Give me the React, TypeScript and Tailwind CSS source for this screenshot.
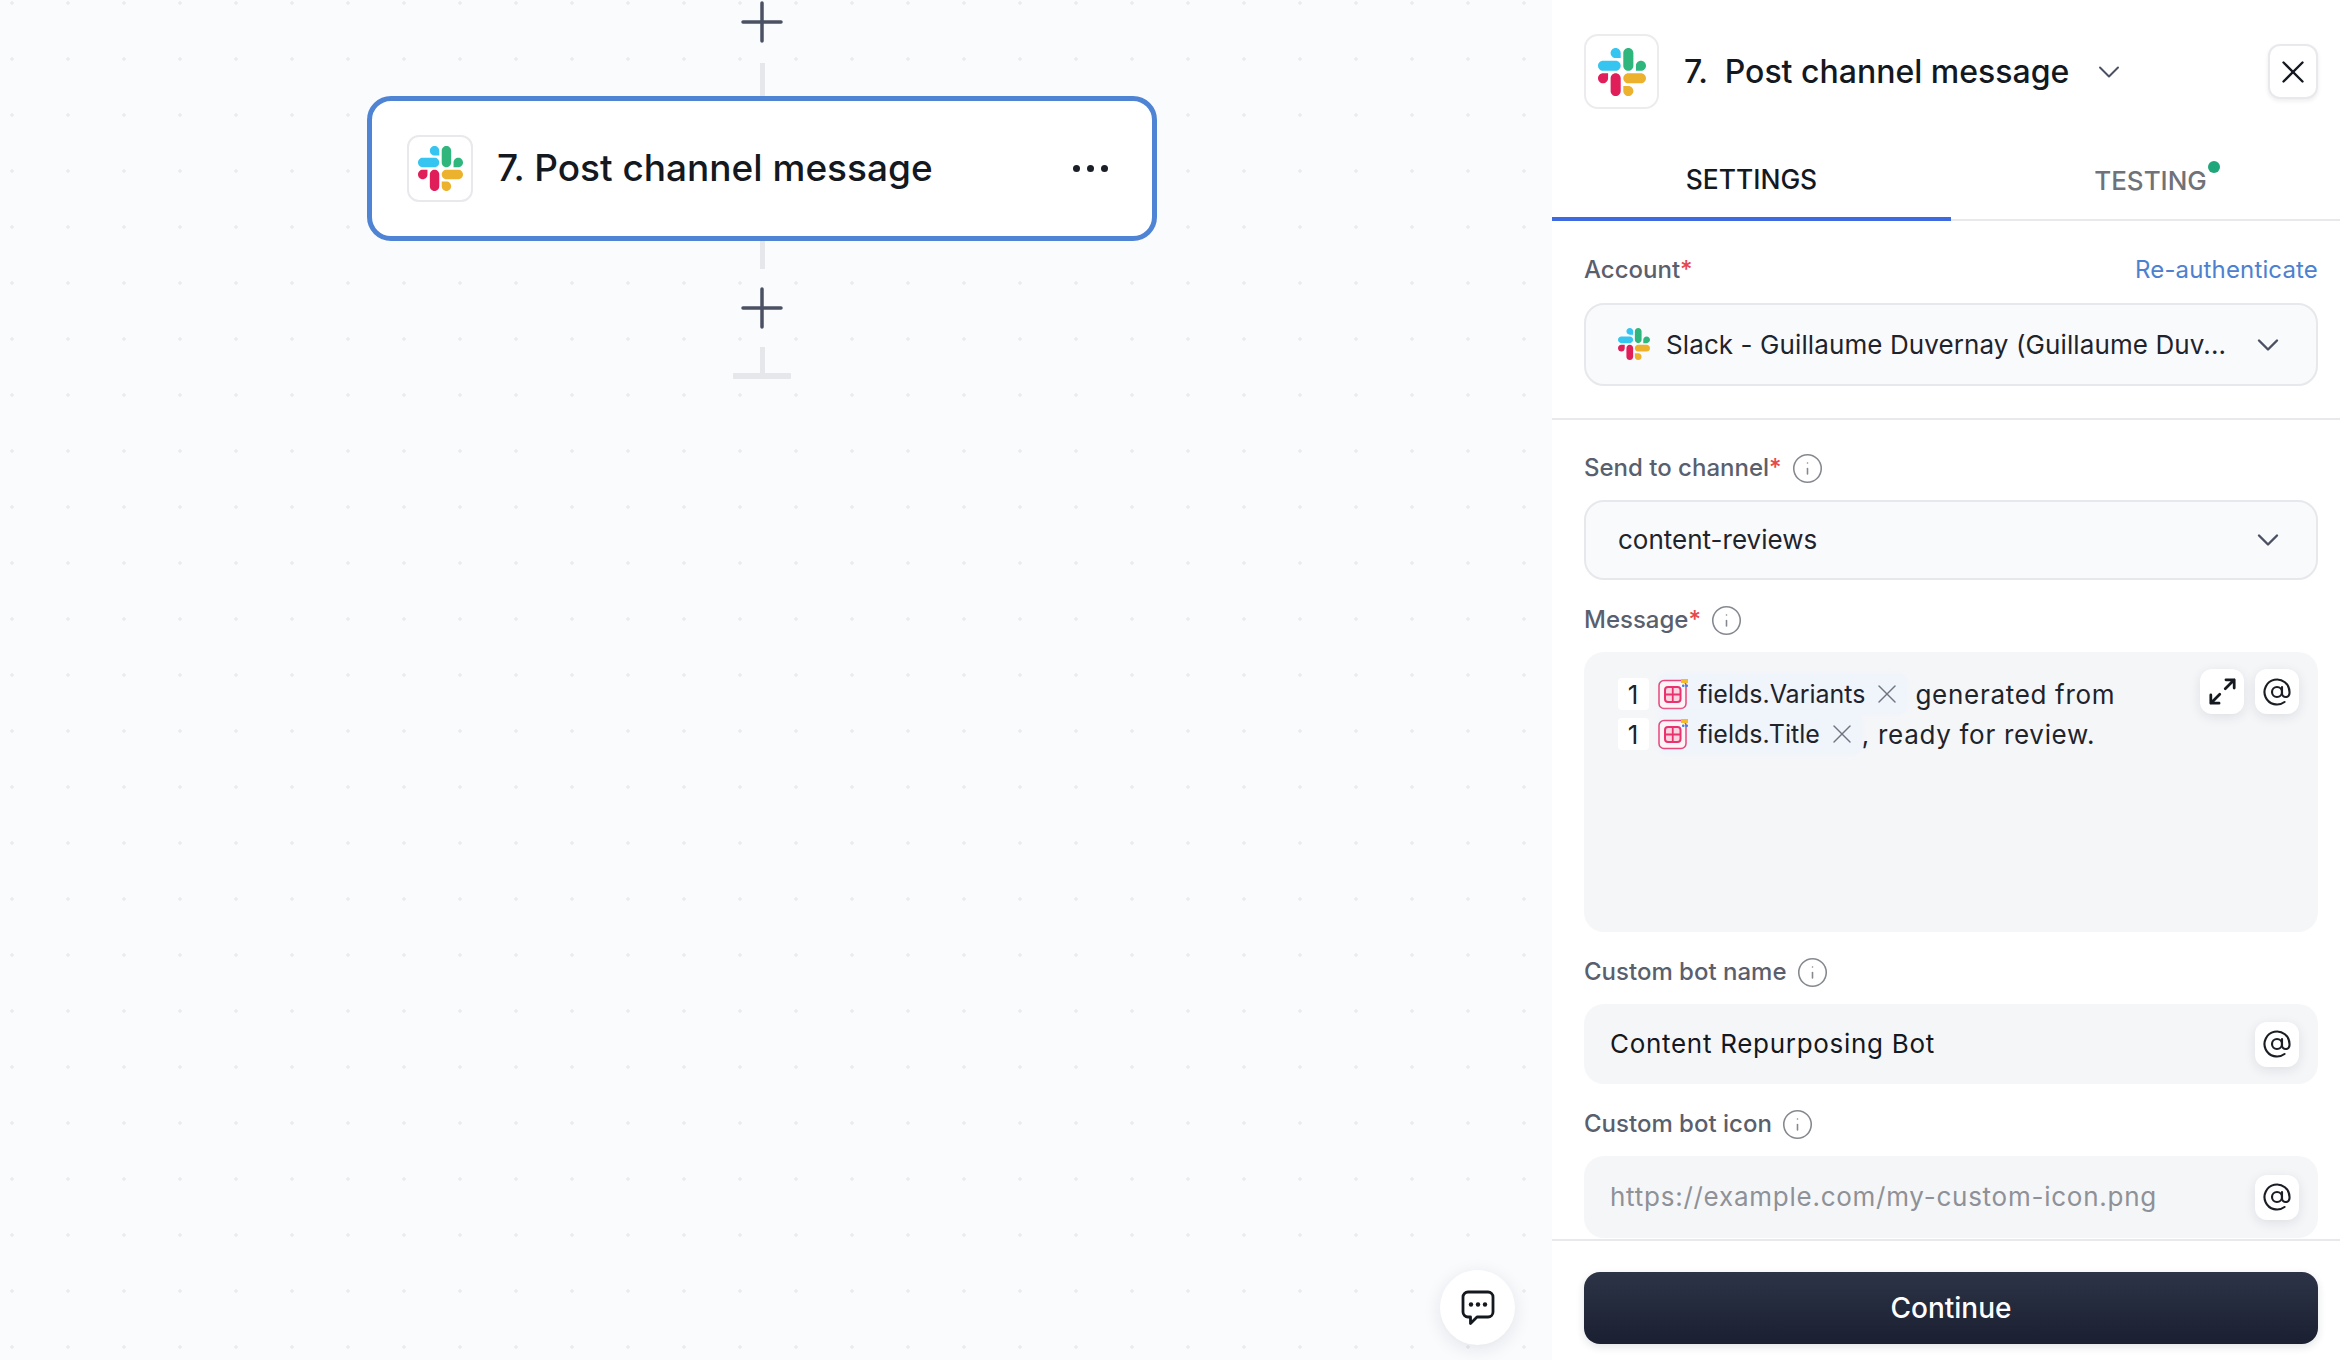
import { ReactNode } from 'react';
import { AtSign, ChevronDown, Info, X } from 'lucide-react';

function SlackLogo({ className }: { className: string }) {
    return (
        <svg viewBox="0 0 122.8 122.8" className={className}>
            <path fill="#E01E5A" d="M25.8 77.6c0 7.1-5.8 12.9-12.9 12.9S0 84.7 0 77.6s5.8-12.9 12.9-12.9h12.9v12.9zM32.3 77.6c0-7.1 5.8-12.9 12.9-12.9s12.9 5.8 12.9 12.9v32.3c0 7.1-5.8 12.9-12.9 12.9s-12.9-5.8-12.9-12.9V77.6z" />
            <path fill="#36C5F0" d="M45.2 25.8c-7.1 0-12.9-5.8-12.9-12.9S38.1 0 45.2 0s12.9 5.8 12.9 12.9v12.9H45.2zM45.2 32.3c7.1 0 12.9 5.8 12.9 12.9s-5.8 12.9-12.9 12.9H12.9C5.8 58.1 0 52.3 0 45.2s5.8-12.9 12.9-12.9h32.3z" />
            <path fill="#2EB67D" d="M97 45.2c0-7.1 5.8-12.9 12.9-12.9s12.9 5.8 12.9 12.9-5.8 12.9-12.9 12.9H97V45.2zM90.5 45.2c0 7.1-5.8 12.9-12.9 12.9s-12.9-5.8-12.9-12.9V12.9C64.7 5.8 70.5 0 77.6 0s12.9 5.8 12.9 12.9v32.3z" />
            <path fill="#ECB22E" d="M77.6 97c7.1 0 12.9 5.8 12.9 12.9s-5.8 12.9-12.9 12.9-12.9-5.8-12.9-12.9V97h12.9zM77.6 90.5c-7.1 0-12.9-5.8-12.9-12.9s5.8-12.9 12.9-12.9h32.3c7.1 0 12.9 5.8 12.9 12.9s-5.8 12.9-12.9 12.9H77.6z" />
        </svg>
    );
}

function PlusMark() {
    return (
        <svg viewBox="0 0 42 42" className="h-[42px] w-[42px] shrink-0" fill="none" stroke="#4b5163" strokeWidth="3.5" strokeLinecap="round">
            <path d="M21 2v38M2 21h38" />
        </svg>
    );
}

function TableChipIcon() {
    return (
        <svg viewBox="0 0 30 31" className="h-[31px] w-[30px] shrink-0" fill="none">
            <rect x="1" y="1.5" width="27" height="28" rx="5" fill="#fdf4f7" stroke="#e8457a" strokeWidth="1.5" />
            <rect x="7" y="8" width="15.5" height="15" rx="3" fill="#fbd5e2" stroke="#e8336f" strokeWidth="2" />
            <path d="M7 15.5h15.5M14.75 8v15" stroke="#e8336f" strokeWidth="1.8" />
            <rect x="23" y="0" width="7" height="4" fill="#f6bb2a" />
            <rect x="24" y="5.5" width="2.5" height="2.5" rx="1" fill="#3f7fe0" />
            <rect x="27.5" y="5.5" width="2.5" height="2.5" rx="1" fill="#3f7fe0" />
        </svg>
    );
}

function FieldLabel({ children, required, info }: { children: ReactNode; required?: boolean; info?: boolean }) {
    return (
        <div className="flex h-[32px] items-center gap-[9px] text-[24px] font-medium leading-none text-[#5a5f6e]">
            <span>
                {children}
                {required && <span className="text-[#e5484d]">*</span>}
            </span>
            {info && <Info className="h-[33px] w-[33px] text-[#85898f]" strokeWidth={1.15} />}
        </div>
    );
}

function IconButton({ children }: { children: ReactNode }) {
    return (
        <div className="flex h-[45px] w-[44px] items-center justify-center rounded-[12px] bg-white text-[#1a1d24] shadow-[0_3px_12px_rgba(20,30,50,0.1)]">
            {children}
        </div>
    );
}

function SelectBox({ children, height }: { children: ReactNode; height: string }) {
    return (
        <div className={`flex ${height} items-center rounded-[20px] border-2 border-[#e7e8eb] bg-[#f9fafc] pl-[32px] pr-[30px]`}>
            <div className="flex min-w-0 flex-1 items-center pb-px text-[26px] text-[#1f232b]">{children}</div>
            <ChevronDown className="h-[36px] w-[36px] shrink-0 text-[#4b5163]" strokeWidth={1.6} />
        </div>
    );
}

function EditorLine({ field, children }: { field: string; children: ReactNode }) {
    return (
        <div className="flex h-[40px] items-center text-[26px] tracking-[0.7px] text-[#1f232b]">
            <span className="flex h-[32px] w-[31px] shrink-0 items-center justify-center rounded-[4px] bg-white">1</span>
            <span className="ml-[9px] flex h-[40px] items-center rounded-[8px] bg-[#f0f4fb] pr-[4px] tracking-normal shadow-[0_0_10px_#f0f4fb]">
                <TableChipIcon />
                <span className="ml-[10px] pt-[2px] text-[25px]">{field}</span>
                <X className="ml-[6px] h-[32px] w-[32px] text-[#6f7480]" strokeWidth={1.05} />
            </span>
            {children}
        </div>
    );
}

function AtIcon() {
    return <AtSign className="h-[30px] w-[30px]" strokeWidth={1.7} />;
}

export default function App() {
    return (
        <div className="flex h-[1360px] w-[2340px] overflow-hidden font-['Inter',sans-serif]">
            {/* Canvas */}
            <div className="relative h-full w-[1552px] shrink-0 bg-[#fafbfd] bg-[radial-gradient(circle,#e9ebee_1.4px,transparent_2px)] bg-[size:56px_56px] bg-[position:-16px_-25px]">
                <div className="ml-[367px] flex w-[790px] flex-col items-center pt-px">
                    <PlusMark />
                    <div className="mt-[20px] h-[33px] w-[5px] bg-[#e6e7ea]" />
                    <div className="flex h-[145px] w-full items-center rounded-[24px] border-[5px] border-[#4f84d5] bg-white pl-[35px] pr-[44px]">
                        <div className="flex h-[67px] w-[66px] shrink-0 items-center justify-center rounded-[12px] border-2 border-[#e8e9ec] bg-white">
                            <SlackLogo className="h-[45px] w-[45px]" />
                        </div>
                        <div className="ml-[24px] flex-1 pb-[2px] text-[37px] font-medium leading-none text-[#14181f]">7. Post channel message</div>
                        <div className="flex gap-[7px]">
                            <span className="h-[7px] w-[7px] rounded-full bg-[#1b1f27]" />
                            <span className="h-[7px] w-[7px] rounded-full bg-[#1b1f27]" />
                            <span className="h-[7px] w-[7px] rounded-full bg-[#1b1f27]" />
                        </div>
                    </div>
                    <div className="h-[28px] w-[5px] bg-[#e6e7ea]" />
                    <div className="mt-[18px]">
                        <PlusMark />
                    </div>
                    <div className="mt-[18px] h-[26px] w-[5px] bg-[#e6e7ea]" />
                    <div className="h-[6px] w-[58px] rounded-[1px] bg-[#e6e7ea]" />
                </div>

                <div className="absolute left-[1440px] top-[1270px] flex h-[75px] w-[75px] items-center justify-center rounded-full bg-white shadow-[0_4px_18px_rgba(20,30,50,0.1)]">
                    <svg viewBox="0 0 34 36" className="h-[36px] w-[34px]" fill="none">
                        <path d="M7 2h20a5 5 0 0 1 5 5v15a5 5 0 0 1-5 5H16l-6.5 6.5V27H7a5 5 0 0 1-5-5V7a5 5 0 0 1 5-5z" stroke="#14181f" strokeWidth="2.8" strokeLinejoin="round" />
                        <circle cx="10" cy="14.5" r="2.2" fill="#14181f" />
                        <circle cx="17" cy="14.5" r="2.2" fill="#14181f" />
                        <circle cx="24" cy="14.5" r="2.2" fill="#14181f" />
                    </svg>
                </div>
            </div>

            {/* Side panel */}
            <div className="flex h-full w-[788px] shrink-0 flex-col bg-white shadow-[-4px_0_10px_rgba(20,30,50,0.04)]">
                <div className="flex h-[143px] shrink-0 items-start pl-[32px] pr-[22px] pt-[34px]">
                    <div className="flex h-[75px] w-[75px] shrink-0 items-center justify-center rounded-[14px] border-2 border-[#ececef] bg-white">
                        <SlackLogo className="h-[48px] w-[48px]" />
                    </div>
                    <div className="ml-[25px] mt-[20px] whitespace-pre text-[32px] font-medium leading-[36px] text-[#14181f]">7.  Post channel message</div>
                    <ChevronDown className="ml-[22px] mt-[20px] h-[36px] w-[36px] text-[#4b5163]" strokeWidth={1.3} />
                    <div className="ml-auto mt-[10px] flex h-[55px] w-[50px] items-center justify-center rounded-[12px] border-2 border-[#e8e9ec] bg-white shadow-[0_2px_4px_rgba(20,30,50,0.08)]">
                        <X className="h-[38px] w-[38px] text-[#14181f]" strokeWidth={1.5} />
                    </div>
                </div>

                <div className="flex h-[78px] shrink-0 border-b-2 border-[#e8e9ec]">
                    <div className="-mb-[2px] flex w-[399px] items-center justify-center border-b-[4px] border-[#3e6ae1] pb-[1px] text-[26.4px] font-medium text-[#14181f]">
                        SETTINGS
                    </div>
                    <div className="flex flex-1 items-center justify-center pb-[2px] pl-[10px] text-[26px] font-medium text-[#6f7278]">
                        <span className="relative">
                            TESTING
                            <span className="absolute -right-[13px] top-0 h-[12px] w-[12px] rounded-full bg-[#1fa67a]" />
                        </span>
                    </div>
                </div>

                <div className="shrink-0 border-b-2 border-[#e8e9ec] pb-[32px] pl-[32px] pr-[22px] pt-[33px]">
                    <div className="mb-[17px] flex items-center justify-between">
                        <FieldLabel required>Account</FieldLabel>
                        <span className="text-[24px] leading-none tracking-[0.15px] text-[#4d81cf]">Re-authenticate</span>
                    </div>
                    <SelectBox height="h-[83px]">
                        <SlackLogo className="h-[32px] w-[32px] shrink-0" />
                        <span className="ml-[16px] whitespace-nowrap tracking-[0.1px]">Slack - Guillaume Duvernay (Guillaume Duv...</span>
                    </SelectBox>
                </div>

                <div className="min-h-0 flex-1 overflow-hidden pl-[32px] pr-[22px] pt-[32px]">
                    <FieldLabel required info>Send to channel</FieldLabel>
                    <div className="mt-[16px]">
                        <SelectBox height="h-[80px]">content-reviews</SelectBox>
                    </div>

                    <div className="mt-[24px]">
                        <FieldLabel required info>Message</FieldLabel>
                    </div>
                    <div className="relative mt-[16px] h-[280px] rounded-[20px] bg-[#f5f6f8] pl-[34px] pt-[22px]">
                        <EditorLine field="fields.Variants">
                            <span className="ml-[8px]">generated from</span>
                        </EditorLine>
                        <EditorLine field="fields.Title">
                            <span>, ready for review.</span>
                        </EditorLine>
                        <div className="absolute right-[19px] top-[17px] flex gap-[11px]">
                            <IconButton>
                                <svg viewBox="0 0 24 24" className="h-[33px] w-[33px]" fill="none" stroke="#14181f" strokeWidth="2" strokeLinecap="round" strokeLinejoin="round">
                                    <path d="M14.5 3.5h6v6M20.5 3.5l-6.5 6.5M9.5 20.5h-6v-6M3.5 20.5l6.5-6.5" />
                                </svg>
                            </IconButton>
                            <IconButton>
                                <AtIcon />
                            </IconButton>
                        </div>
                    </div>

                    <div className="mt-[24px]">
                        <FieldLabel info>Custom bot name</FieldLabel>
                    </div>
                    <div className="mt-[16px] flex h-[80px] items-center justify-between rounded-[20px] bg-[#f5f6f8] pl-[26px] pr-[19px] text-[26px] tracking-[0.7px] text-[#14181f]">
                        <span className="pb-[2px]">Content Repurposing Bot</span>
                        <IconButton>
                            <AtIcon />
                        </IconButton>
                    </div>

                    <div className="mt-[24px]">
                        <FieldLabel info>Custom bot icon</FieldLabel>
                    </div>
                    <div className="mt-[16px] flex h-[82px] items-center justify-between rounded-[20px] bg-[#f5f6f8] pl-[26px] pr-[19px] text-[26px] tracking-[0.75px] text-[#8e9197]">
                        <span className="pb-[2px]">https://example.com/my-custom-icon.png</span>
                        <IconButton>
                            <AtIcon />
                        </IconButton>
                    </div>
                </div>

                <div className="flex h-[121px] shrink-0 items-start border-t-2 border-[#e8e9ec] bg-white pl-[32px] pr-[22px] pt-[31px]">
                    <button className="h-[72px] w-full rounded-[16px] bg-gradient-to-b from-[#2d3447] to-[#1a2031] text-[28px] font-medium text-white shadow-[0_3px_8px_rgba(20,30,50,0.12)]">
                        Continue
                    </button>
                </div>
            </div>
        </div>
    );
}
